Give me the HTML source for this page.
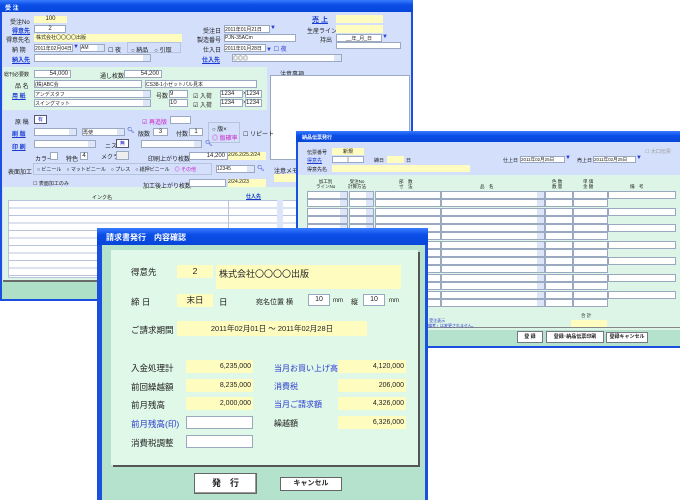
<!DOCTYPE html>
<html><head><meta charset="utf-8">
<style>
*{margin:0;padding:0;box-sizing:border-box}
body{width:680px;height:500px;background:#fff;position:relative;overflow:hidden;font-family:"Liberation Sans","Noto Sans CJK JP",sans-serif;font-size:6px;color:#222}
.a{position:absolute;white-space:nowrap}
.t{position:absolute;background:linear-gradient(#3a7cff,#0a4ee8 40%,#0846d8);color:#fff;font-weight:bold}
.w{position:absolute;background:#fff;border:1px solid #9aa8c0}
.y{position:absolute;background:#fffcc0}
.l{position:absolute;color:#1a3ccf;text-decoration:underline;font-weight:bold;white-space:nowrap}
.s{position:absolute;background:#fff;border:1px solid #9aa8c0}
.s:after{content:"";position:absolute;right:0;top:0;bottom:0;width:7px;background:#dde6f8}
.r{text-align:right;padding-right:2px}
.bl{color:#2a3ccf}
</style></head><body>

<!-- WINDOW 1 -->
<div class="a" style="left:0;top:0;width:413px;height:301px;background:#d3dffb;border:2px solid #1a4fe0;border-top:none"></div>
<div class="t" style="left:0;top:0;width:413px;height:12px;font-size:6px;padding:3px 5px">受 注</div>
<div class="a" style="left:3px;top:67px;width:264px;height:43px;background:#ddf5e6"></div>
<div class="a" style="left:3px;top:187px;width:295px;height:94px;background:#ddf5e6"></div>
<div class="a" style="left:3px;top:280px;width:295px;height:2px;background:#6a6a6a"></div>
<div class="a" style="left:2px;top:282px;width:409px;height:17px;background:#aee0c8"></div>

<div class="a" style="left:10px;top:17px">受注No</div><div class="y" style="left:34px;top:16px;width:33px;height:7px;text-align:center">100</div>
<div class="l" style="left:312px;top:15px;font-size:7px">売 上</div><div class="y" style="left:336px;top:15px;width:47px;height:8px"></div>
<div class="l" style="left:12px;top:26px">得意先</div><div class="w" style="left:34px;top:25px;width:32px;height:8px;text-align:center">2</div>
<div class="a" style="left:203px;top:26px">受注日</div><div class="w" style="left:224px;top:25px;width:46px;height:8px;font-size:5px">2011年01月21日</div><div class="a bl" style="left:270px;top:25px">▼</div>
<div class="a" style="left:307px;top:26px">生産ライン</div><div class="y" style="left:336px;top:25px;width:47px;height:8px"></div>
<div class="a" style="left:6px;top:35px">得意先名</div><div class="y" style="left:34px;top:34px;width:148px;height:8px;font-size:5px;padding-left:2px">株式会社〇〇〇〇出版</div>
<div class="a" style="left:197px;top:35px">製造番号</div><div class="w" style="left:224px;top:34px;width:72px;height:8px;font-size:5px">PJN-35ACm</div>
<div class="a" style="left:320px;top:35px">持出</div><div class="w" style="left:336px;top:34px;width:46px;height:8px;font-size:5px;text-align:center">__年_月_日</div><div class="a bl" style="left:382px;top:34px">▼</div>
<div class="w" style="left:336px;top:42px;width:65px;height:7px"></div>
<div class="a" style="left:12px;top:45px">納 期</div><div class="w" style="left:34px;top:44px;width:39px;height:8px;font-size:5px">2011年02月04日</div><div class="a bl" style="left:73px;top:44px">▼</div>
<div class="s" style="left:80px;top:44px;width:25px;height:8px;font-size:5px">AM</div>
<div class="a" style="left:108px;top:45px">☐ 夜</div>
<div class="a" style="left:127px;top:42px;width:54px;height:11px;border:1px solid #b8c4dc"></div><div class="a" style="left:131px;top:45px">○ 納品　○ 引取</div>
<div class="a" style="left:203px;top:45px">仕入日</div><div class="w" style="left:224px;top:44px;width:42px;height:8px;font-size:5px">2011年01月28日</div><div class="a bl" style="left:266px;top:44px">▼ ☐ 夜</div>
<div class="l" style="left:12px;top:55px">納入先</div><div class="s" style="left:34px;top:54px;width:117px;height:8px"></div>
<div class="l" style="left:202px;top:55px">仕入先</div><div class="s" style="left:232px;top:54px;width:110px;height:8px;font-size:5px">◎◎◎</div>

<div class="a" style="left:4px;top:71px;font-size:5px">総刊必要数</div><div class="w r" style="left:34px;top:70px;width:37px;height:8px">54,000</div>
<div class="a" style="left:100px;top:71px">通し枚数</div><div class="w r" style="left:124px;top:70px;width:38px;height:8px">54,200</div>
<div class="a" style="left:15px;top:81px">品 名</div><div class="w" style="left:34px;top:80px;width:108px;height:8px;font-size:5px">(株)ABC会</div><div class="w" style="left:145px;top:80px;width:112px;height:8px;font-size:5px">CS38-1小ゼットパル見本</div>
<div class="l" style="left:12px;top:91px">用 紙</div><div class="s" style="left:34px;top:90px;width:117px;height:8px;font-size:5px">アンデスタフ</div>
<div class="a" style="left:156px;top:91px">号数</div><div class="w" style="left:169px;top:90px;width:19px;height:8px">9</div><div class="a" style="left:193px;top:91px">☑ 入荷</div>
<div class="w" style="left:220px;top:90px;width:23px;height:8px">1234</div><div class="a" style="left:243px;top:91px">×</div><div class="w" style="left:245px;top:90px;width:17px;height:8px">1234</div>
<div class="s" style="left:34px;top:99px;width:117px;height:8px;font-size:5px">スイングマット</div>
<div class="w" style="left:169px;top:99px;width:19px;height:8px">10</div><div class="a" style="left:193px;top:100px">☑ 入荷</div>
<div class="w" style="left:220px;top:99px;width:23px;height:8px">1234</div><div class="a" style="left:243px;top:100px">×</div><div class="w" style="left:245px;top:99px;width:17px;height:8px">1234</div>

<div class="a" style="left:280px;top:69px">注意事項</div>
<div class="w" style="left:270px;top:75px;width:140px;height:85px"></div>

<div class="a" style="left:15px;top:117px">原 稿</div><div class="w" style="left:34px;top:115px;width:13px;height:9px;font-size:5px;text-align:center;color:#22c;border-color:#557">有</div>
<div class="a" style="left:142px;top:117px;color:#c2c">☑ 再追版</div><div class="w" style="left:170px;top:116px;width:21px;height:8px"></div>
<div class="l" style="left:12px;top:129px">刷 版</div><div class="s" style="left:34px;top:128px;width:43px;height:8px"></div><div class="s" style="left:82px;top:128px;width:43px;height:8px;font-size:5px">再使</div><div class="a bl" style="left:127px;top:127px">🔍︎</div>
<div class="a" style="left:138px;top:129px">版数</div><div class="w" style="left:153px;top:128px;width:15px;height:8px;text-align:center">3</div>
<div class="a" style="left:176px;top:129px">付数</div><div class="w" style="left:189px;top:128px;width:14px;height:8px;text-align:center">1</div>
<div class="a" style="left:208px;top:122px;width:32px;height:21px;border:1px solid #b8c4dc"></div><div class="a" style="left:212px;top:124px">○ 版×</div><div class="a" style="left:212px;top:133px;color:#c2c">◎ 版確率</div>
<div class="a" style="left:243px;top:129px">☐ リピート</div>
<div class="l" style="left:12px;top:142px">印 刷</div><div class="s" style="left:34px;top:140px;width:62px;height:8px"></div>
<div class="a" style="left:105px;top:141px">ニス</div><div class="w" style="left:116px;top:139px;width:13px;height:9px;font-size:5px;text-align:center;color:#22c;border-color:#557">無</div>
<div class="s" style="left:141px;top:140px;width:61px;height:8px"></div><div class="a bl" style="left:205px;top:140px">🔍︎</div>
<div class="a" style="left:35px;top:154px">カラー</div><div class="w" style="left:50px;top:152px;width:8px;height:8px"></div>
<div class="a" style="left:66px;top:154px">特色</div><div class="w" style="left:80px;top:152px;width:8px;height:8px;text-align:center">4</div>
<div class="a" style="left:101px;top:152px">メクラ</div><div class="w" style="left:116px;top:151px;width:13px;height:9px;background:#eee"></div>
<div class="a" style="left:148px;top:154px">印刷上がり枚数</div><div class="w r" style="left:189px;top:152px;width:39px;height:8px">14,200</div><div class="y" style="left:228px;top:152px;width:38px;height:8px;font-size:5px">2/26.2/25.2/24</div>
<div class="a" style="left:8px;top:167px">表面加工</div>
<div class="a" style="left:33px;top:163px;width:179px;height:12px;border:1px solid #b8c4dc"></div>
<div class="a" style="left:37px;top:166px;font-size:5px">○ ビニール　○ マットビニール　○ プレス　○ 紙押ビニール　<span style="color:#c2c">◎ その他</span></div>
<div class="s" style="left:216px;top:165px;width:39px;height:8px;font-size:5px">12345</div><div class="a bl" style="left:257px;top:165px">🔍︎</div>
<div class="a" style="left:274px;top:166px">注意メモ</div><div class="y" style="left:274px;top:174px;width:24px;height:8px"></div>
<div class="a" style="left:33px;top:180px;font-size:5px">☐ 表面加工のみ</div>
<div class="a" style="left:143px;top:181px">加工後上がり枚数</div><div class="w" style="left:189px;top:179px;width:37px;height:8px"></div><div class="y" style="left:228px;top:179px;width:38px;height:8px;font-size:5px">2/24.2/23</div>

<div class="a" style="left:92px;top:194px;font-size:5px">インク名</div><div class="l" style="left:246px;top:193px;font-size:5px">仕入先</div>
<div class="a" style="left:8px;top:200px;width:290px;height:78px;background:repeating-linear-gradient(#fff 0 6.5px,#b8c4dc 6.5px 7.5px);border:1px solid #b8c4dc"></div>
<div class="a" style="left:228px;top:200px;width:1px;height:78px;background:#b8c4dc"></div>
<div class="a" style="left:277px;top:200px;width:6px;height:78px;background:#dde6f8"></div>

<!-- WINDOW 2 -->
<div class="a" style="left:296px;top:131px;width:384px;height:217px;background:#ddf5e6;border-left:2px solid #1a4fe0;border-bottom:2px solid #1a4fe0"></div>
<div class="t" style="left:296px;top:131px;width:384px;height:11px;font-size:5px;padding:3px 6px">納品伝票発行</div>
<div class="a" style="left:298px;top:142px;width:382px;height:33px;background:#d3dffb"></div>
<div class="a" style="left:298px;top:330px;width:382px;height:16px;background:#b4e2cc"></div>
<div class="a" style="left:298px;top:327px;width:382px;height:1px;background:#888"></div>
<div class="a" style="left:307px;top:149px;font-size:5px">伝票番号</div><div class="y" style="left:332px;top:148px;width:32px;height:7px;font-size:5px;text-align:center">新規</div>
<div class="a" style="left:645px;top:148px;font-size:5px;color:#999">☐ 大口伝票</div>
<div class="l" style="left:307px;top:157px;font-size:5px;font-weight:normal">得意先</div><div class="w" style="left:332px;top:156px;width:32px;height:7px;font-size:5px;text-align:center">|</div>
<div class="a" style="left:374px;top:157px;font-size:5px">締日</div><div class="y" style="left:387px;top:156px;width:17px;height:7px"></div><div class="a" style="left:406px;top:157px;font-size:5px">日</div>
<div class="a" style="left:503px;top:157px;font-size:5px">仕上日</div><div class="w" style="left:520px;top:156px;width:45px;height:7px;font-size:4.5px">2011年02月25日</div><div class="a bl" style="left:565px;top:155px">▼</div>
<div class="a" style="left:577px;top:157px;font-size:5px">売上日</div><div class="w" style="left:593px;top:156px;width:43px;height:7px;font-size:4.5px">2011年02月25日</div><div class="a bl" style="left:636px;top:155px">▼</div>
<div class="a" style="left:307px;top:166px;font-size:5px">得意先名</div><div class="y" style="left:332px;top:165px;width:138px;height:7px"></div>
<div class="a" style="left:316px;top:179px;font-size:4.5px;text-align:center;line-height:5px">加工別<br>ラインNo</div>
<div class="a" style="left:348px;top:179px;font-size:4.5px;text-align:center;line-height:5px">受注No<br>計算方法</div>
<div class="a" style="left:399px;top:179px;font-size:4.5px;line-height:5px">部　数<br>寸　法</div>
<div class="a" style="left:480px;top:184px;font-size:4.5px">品　名</div>
<div class="a" style="left:552px;top:179px;font-size:4.5px;line-height:5px">色 数<br>数 量</div>
<div class="a" style="left:583px;top:179px;font-size:4.5px;line-height:5px">単 価<br>金 額</div>
<div class="a" style="left:630px;top:184px;font-size:4.5px">備　考</div>
<div id="g2"></div>
<div class="a bl" style="left:424px;top:318px;font-size:4px;line-height:5px">→ 受注表示<br>「備考」は変更されません。</div>
<div class="a" style="left:581px;top:313px;font-size:4.5px">合 計</div><div class="y" style="left:571px;top:320px;width:36px;height:7px"></div>
<div class="w" style="left:517px;top:331px;width:26px;height:12px;font-size:5px;text-align:center;line-height:10px;font-weight:bold;border-color:#778">登 録</div>
<div class="w" style="left:546px;top:331px;width:58px;height:12px;font-size:5px;text-align:center;line-height:10px;font-weight:bold;border-color:#778">登録･納品伝票印刷</div>
<div class="w" style="left:606px;top:332px;width:42px;height:11px;font-size:5px;text-align:center;line-height:9px;font-weight:bold;border-color:#778">登録キャンセル</div>

<!-- WINDOW 3 -->
<div class="a" style="left:97px;top:228px;width:331px;height:272px;background:#b4e2cc;border-left:5px solid #1a4fe0;border-right:3px solid #1a4fe0"></div>
<div class="t" style="left:97px;top:228px;width:331px;height:17px;font-size:8px;padding:4px 9px">請求書発行　内容確認</div>
<div class="a" style="left:111px;top:250px;width:307px;height:215px;background:#e0f8e8;box-shadow:2px 2px 0 #555"></div>
<div style="font-size:8.5px">
<div class="a" style="left:131px;top:266px">得意先</div><div class="y" style="left:177px;top:265px;width:36px;height:13px;text-align:center;line-height:13px">2</div>
<div class="y" style="left:216px;top:265px;width:185px;height:24px;padding:2px 3px;font-size:9px">株式会社〇〇〇〇出版</div>
<div class="a" style="left:131px;top:296px">締 日</div><div class="y" style="left:177px;top:294px;width:36px;height:13px;text-align:center;line-height:13px">末日</div>
<div class="a" style="left:219px;top:296px">日</div>
<div class="a" style="left:256px;top:297px;font-size:7px">宛名位置 横</div><div class="w" style="left:308px;top:294px;width:22px;height:12px;text-align:center;font-size:7px;line-height:10px">10</div>
<div class="a" style="left:333px;top:298px;font-size:6px">mm</div><div class="a" style="left:351px;top:297px;font-size:7px">縦</div>
<div class="w" style="left:363px;top:294px;width:22px;height:12px;text-align:center;font-size:7px;line-height:10px">10</div><div class="a" style="left:389px;top:298px;font-size:6px">mm</div>
<div class="a" style="left:131px;top:324px">ご請求期間</div><div class="y" style="left:177px;top:321px;width:190px;height:15px;text-align:center;line-height:15px;font-size:7.5px">2011年02月01日 ～ 2011年02月28日</div>
<div class="a" style="left:131px;top:362px">入金処理計</div><div class="y r" style="left:186px;top:360px;width:67px;height:13px;line-height:13px;font-size:7px">6,235,000</div>
<div class="a bl" style="left:274px;top:363px;font-size:8px">当月お買い上げ高</div><div class="y r" style="left:338px;top:360px;width:68px;height:13px;line-height:13px;font-size:7px">4,120,000</div>
<div class="a" style="left:131px;top:381px">前回繰越額</div><div class="y r" style="left:186px;top:379px;width:67px;height:13px;line-height:13px;font-size:7px">8,235,000</div>
<div class="a bl" style="left:274px;top:381px;font-size:8px">消費税</div><div class="y r" style="left:338px;top:379px;width:68px;height:13px;line-height:13px;font-size:7px">206,000</div>
<div class="a" style="left:131px;top:399px">前月残高</div><div class="y r" style="left:186px;top:397px;width:67px;height:13px;line-height:13px;font-size:7px">2,000,000</div>
<div class="a bl" style="left:274px;top:399px;font-size:8px">当月ご請求額</div><div class="y r" style="left:338px;top:397px;width:68px;height:13px;line-height:13px;font-size:7px">4,326,000</div>
<div class="a bl" style="left:131px;top:418px">前月残高(印)</div><div class="w" style="left:186px;top:416px;width:67px;height:13px"></div>
<div class="a" style="left:274px;top:418px;font-size:8px">繰越額</div><div class="y r" style="left:338px;top:416px;width:68px;height:13px;line-height:13px;font-size:7px">6,326,000</div>
<div class="a" style="left:131px;top:437px">消費税調整</div><div class="w" style="left:186px;top:435px;width:67px;height:13px"></div>
</div>
<div class="w" style="left:194px;top:473px;width:63px;height:21px;font-size:9px;font-weight:bold;text-align:center;line-height:19px;border:1px solid #666;box-shadow:inset -1px -1px 0 #999">発　行</div>
<div class="w" style="left:280px;top:477px;width:62px;height:14px;font-size:7px;font-weight:bold;text-align:center;line-height:12px;border:1px solid #666">キャンセル</div>

<script>
var h='';
var cols=[[307,348,1],[349,374,1],[375,441,0],[441,545,1],[545,573,0],[573,608,0]];
for(var g=0;g<7;g++){var y=191+g*16.6;
 for(var s=0;s<2;s++){var yy=y+s*8;
  cols.forEach(function(c){h+='<div class="'+(c[2]?'s':'w')+'" style="left:'+c[0]+'px;top:'+yy+'px;width:'+(c[1]-c[0])+'px;height:8px"></div>';});
 }
 h+='<div class="w" style="left:608px;top:'+y+'px;width:68px;height:8px"></div>';
}
document.getElementById('g2').innerHTML=h;
</script>
</body></html>
